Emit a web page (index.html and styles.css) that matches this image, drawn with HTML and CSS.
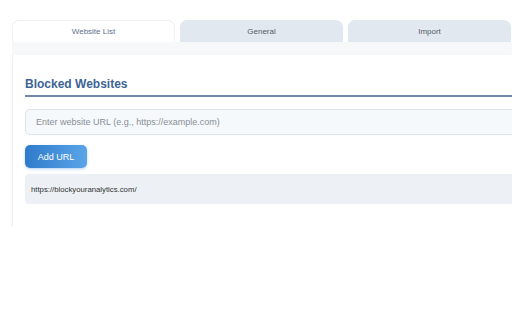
FILE: index.html
```html
<!DOCTYPE html>
<html lang="en">
<head>
<meta charset="utf-8">
<title>Blocked Websites</title>
<link rel="stylesheet" href="styles.css">
</head>
<body>
<div class="page">
  <div class="tabs">
    <div class="tab active">Website List</div>
    <div class="tab">General</div>
    <div class="tab">Import</div>
  </div>
  <div class="tab-strip"></div>
  <div class="panel">
    <h2 class="title">Blocked Websites</h2>
    <input class="url-input" type="text" placeholder="Enter website URL (e.g., https://example.com)">
    <div class="actions"><button class="add-btn">Add URL</button></div>
    <div class="list">
      <div class="item">https://blockyouranalytics.com/</div>
    </div>
  </div>
</div>
</body>
</html>
```
FILE: styles.css
```css
html, body {
  margin: 0;
  padding: 0;
  background: #ffffff;
  overflow: hidden;
  font-family: "Liberation Sans", Arial, sans-serif;
}
.page {
  width: 500px;
  padding: 20px 0 0 12px;
}
.tabs {
  display: flex;
  gap: 5px;
}
.tab {
  width: 163px;
  height: 22px;
  box-sizing: border-box;
  border-radius: 7px 7px 0 0;
  background: #e2e8f0;
  color: #555b66;
  font-size: 8px;
  display: flex;
  align-items: center;
  justify-content: center;
}
.tab.active {
  background: #ffffff;
  border: 1px solid #eef1f5;
  border-bottom: none;
  color: #62708e;
}
.tab-strip {
  height: 13px;
  background: #f6f8fa;
}
.panel {
  background: #ffffff;
  border-left: 1px solid #edf0f3;
  box-shadow: 0 1px 3px rgba(0,0,0,0.05);
  padding: 22px 0 22px 12px;
}
.title {
  margin: 0;
  font-size: 12px;
  line-height: 14px;
  font-weight: bold;
  color: #3d6495;
  padding-bottom: 4px;
  border-bottom: 2px solid #7189a8;
}
.url-input {
  display: block;
  width: 100%;
  box-sizing: border-box;
  margin: 12px 0 0;
  height: 26px;
  padding: 0 10px;
  background: #f5f9fc;
  border: 1px solid #dfe5ec;
  border-right: none;
  border-radius: 5px 0 0 5px;
  font-family: "Liberation Sans", Arial, sans-serif;
  font-size: 9px;
  color: #333;
  outline: none;
}
.url-input::placeholder {
  color: #8a8f96;
}
.actions {
  margin-top: 10px;
}
.add-btn {
  width: 62px;
  height: 23px;
  border: none;
  border-radius: 5px;
  background: linear-gradient(90deg, #2f7bcb, #5aa5e8);
  color: #ffffff;
  font-family: "Liberation Sans", Arial, sans-serif;
  font-size: 9px;
  box-shadow: 0 1px 3px rgba(47,123,203,0.35);
  padding: 0;
}
.list {
  margin-top: 6px;
}
.item {
  height: 30px;
  box-sizing: border-box;
  padding: 0 6px;
  display: flex;
  align-items: center;
  background: #edf1f5;
  border-radius: 4px 0 0 4px;
  font-size: 7.75px;
  color: #333333;
}
```
